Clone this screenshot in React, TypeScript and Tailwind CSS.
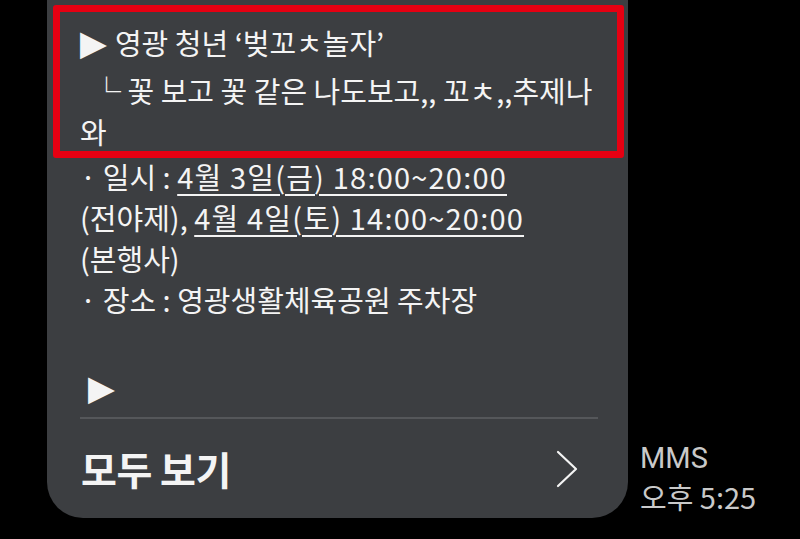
export default function App() {
  const font = { fontFamily: '"Noto Sans CJK KR", "Noto Sans", sans-serif' };
  const tri = { fontFamily: '"DejaVu Sans", sans-serif' };
  return (
    <div className="w-[800px] h-[539px] bg-black overflow-hidden flex items-start" style={font}>
      {/* message bubble */}
      <div className="ml-[47px] w-[581px] h-[518px] bg-[#3c3e41] rounded-b-[36px] flex flex-col text-[#f4f4f4] text-[29px] leading-[41px]">
        {/* highlighted part */}
        <div className="mt-[5px] ml-[6px] mr-[4px] h-[153px] border-[7px] border-[#e60012] rounded-[3px] pl-[20px] pt-[10px]">
          <p className="mb-[6px] whitespace-nowrap">
            <span className="text-[35px] leading-[41px] mr-[8px]" style={tri}>▶</span>
            영광 청년 ‘벚꼬ㅊ놀자’
          </p>
          <p className="whitespace-nowrap pl-[12px]">└ 꽃 보고 꽃 같은 나도보고,, 꼬ㅊ,,추제나</p>
          <p>와</p>
        </div>

        <div className="-mt-[2px] pl-[33px]">
          <p className="whitespace-nowrap">
            · 일시 : <span className="underline decoration-2 underline-offset-[5px] tracking-[1.2px]">4월 3일(금) 18:00~20:00</span>
          </p>
          <p className="whitespace-nowrap">
            (전야제), <span className="underline decoration-2 underline-offset-[5px] tracking-[1.2px]">4월 4일(토) 14:00~20:00</span>
          </p>
          <p>(본행사)</p>
          <p className="whitespace-nowrap">· 장소 : 영광생활체육공원 주차장</p>
          <p className="mt-[47px] pl-[8px]">
            <span className="text-[35px] leading-[41px]" style={tri}>▶</span>
          </p>
        </div>

        <div className="mt-auto ml-[33px] mr-[30px] h-[2px] bg-[#55575a]" />
        <div className="h-[99px] flex items-center justify-between pl-[34px] pr-[48px]">
          <span className="text-[39px] font-bold tracking-[-0.5px]">모두 보기</span>
          <svg width="26" height="40" viewBox="0 0 26 40" fill="none">
            <path d="M4 3 L22 20 L4 37" stroke="#f4f4f4" strokeWidth="2.2" strokeLinecap="round" strokeLinejoin="round" />
          </svg>
        </div>
      </div>

      {/* meta */}
      <div className="self-end mb-[24px] ml-[12px] flex flex-col text-[#c9c9c9] text-[29px] leading-[38px]">
        <span style={{ fontFamily: 'Roboto, "Noto Sans CJK KR", sans-serif' }}>MMS</span>
        <span className="whitespace-nowrap">오후 5:25</span>
      </div>
    </div>
  );
}
